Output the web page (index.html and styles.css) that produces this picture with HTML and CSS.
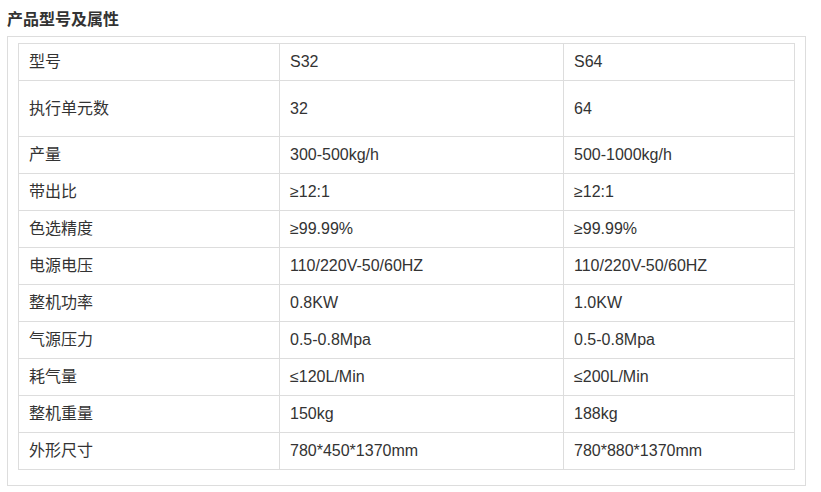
FILE: index.html
```html
<!DOCTYPE html>
<html lang="zh-CN">
<head>
<meta charset="utf-8">
<title>产品型号及属性</title>
<link rel="stylesheet" href="styles.css">
</head>
<body>
<h3 class="title">产品型号及属性</h3>
<div class="box">
  <table class="spec">
    <colgroup><col class="c1"><col class="c2"><col class="c3"></colgroup>
    <tbody>
      <tr><td>型号</td><td>S32</td><td>S64</td></tr>
      <tr class="tall"><td>执行单元数</td><td>32</td><td>64</td></tr>
      <tr><td>产量</td><td>300-500kg/h</td><td>500-1000kg/h</td></tr>
      <tr><td>带出比</td><td>≥12:1</td><td>≥12:1</td></tr>
      <tr><td>色选精度</td><td>≥99.99%</td><td>≥99.99%</td></tr>
      <tr><td>电源电压</td><td>110/220V-50/60HZ</td><td>110/220V-50/60HZ</td></tr>
      <tr><td>整机功率</td><td>0.8KW</td><td>1.0KW</td></tr>
      <tr><td>气源压力</td><td>0.5-0.8Mpa</td><td>0.5-0.8Mpa</td></tr>
      <tr><td>耗气量</td><td>≤120L/Min</td><td>≤200L/Min</td></tr>
      <tr><td>整机重量</td><td>150kg</td><td>188kg</td></tr>
      <tr><td>外形尺寸</td><td>780*450*1370mm</td><td>780*880*1370mm</td></tr>
    </tbody>
  </table>
</div>
</body>
</html>
```
FILE: styles.css
```css
html, body {
  margin: 0;
  padding: 0;
  background: #fff;
}
body {
  padding: 9px 16px 0 7px;
  font-family: "Liberation Sans", Arial, "Noto Sans CJK SC", sans-serif;
  color: #333;
}
.title {
  margin: 0;
  font-size: 16px;
  line-height: 22px;
  font-weight: bold;
  color: #333;
  height: 27px;
}
.box {
  border: 1px solid #ddd;
  padding: 6px 10px 15px 10px;
  width: 777px;
}
.spec {
  border-collapse: collapse;
  width: 776px;
  table-layout: fixed;
  font-size: 16px;
  color: #333;
}
.c1 { width: 261px; }
.c2 { width: 284px; }
.c3 { width: 231px; }
.spec td {
  border: 1px solid #ddd;
  height: 37px;
  padding: 0 10px;
  box-sizing: border-box;
  vertical-align: middle;
  line-height: 20px;
}
.spec tr.tall td {
  height: 56px;
}
```
